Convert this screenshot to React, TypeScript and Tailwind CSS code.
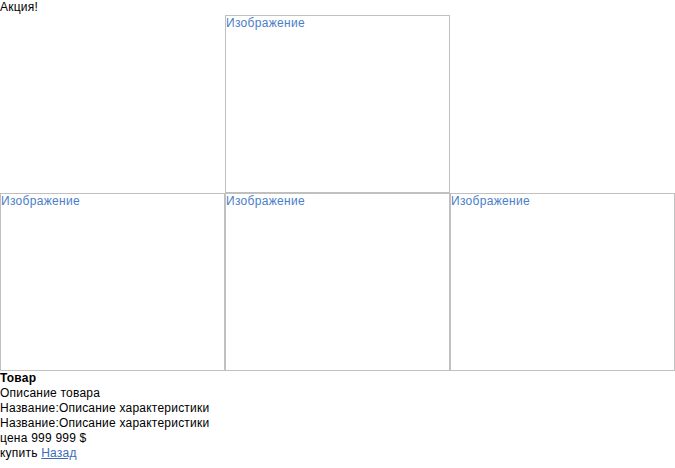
export default function App() {
  const box =
    "w-[225px] h-[178px] border border-[#c0c0c0] text-[#4a7ec9] leading-[15px] tracking-[0.3px]";
  return (
    <div
      className="w-[675px] bg-white text-[12px] leading-[15px] text-black tracking-[0.22px]"
      style={{ fontFamily: '"Liberation Sans", Arial, sans-serif' }}
    >
      <div>Акция!</div>
      <div className="flex">
        <div className="w-[225px]" />
        <div className={box}>Изображение</div>
      </div>
      <div className="flex">
        <div className={box}>Изображение</div>
        <div className={box}>Изображение</div>
        <div className={box}>Изображение</div>
      </div>
      <div className="font-bold">Товар</div>
      <div>Описание товара</div>
      <div>Название:Описание характеристики</div>
      <div>Название:Описание характеристики</div>
      <div>цена 999 999 $</div>
      <div>
        купить{" "}
        <a href="#" className="text-[#3a6cb7] underline">
          Назад
        </a>
      </div>
    </div>
  );
}
